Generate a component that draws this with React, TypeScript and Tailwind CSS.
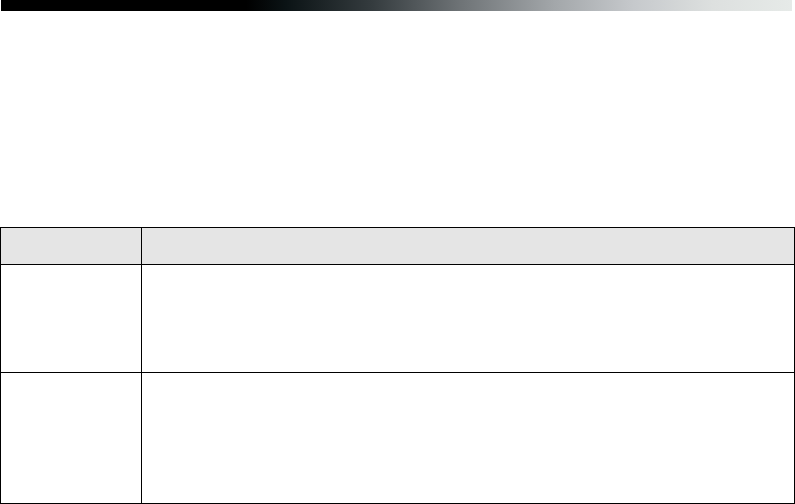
export default function App() {
  return (
    <div className="w-[795px] h-[504px] bg-white overflow-hidden font-['Liberation_Sans',sans-serif]">
      <div className="ml-px w-[791px] h-[11px] bg-[linear-gradient(to_right,#000_0%,#000_31%,#0b1315_36%,#353c3f_47%,#6e7376_58%,#a3a7aa_70%,#c6c9cc_80%,#dde0df_90%,#e6eae8_100%)]" />
      <table className="mt-[216px] w-[795px] border-collapse">
        <thead>
          <tr className="h-[37px] bg-[#e5e5e5]">
            <th className="w-[141px] border border-black p-0" />
            <th className="border border-black p-0" />
          </tr>
        </thead>
        <tbody>
          <tr className="h-[108px]">
            <td className="border border-black p-0" />
            <td className="border border-black p-0" />
          </tr>
          <tr className="h-[131px]">
            <td className="border border-black p-0" />
            <td className="border border-black p-0" />
          </tr>
        </tbody>
      </table>
    </div>
  );
}
